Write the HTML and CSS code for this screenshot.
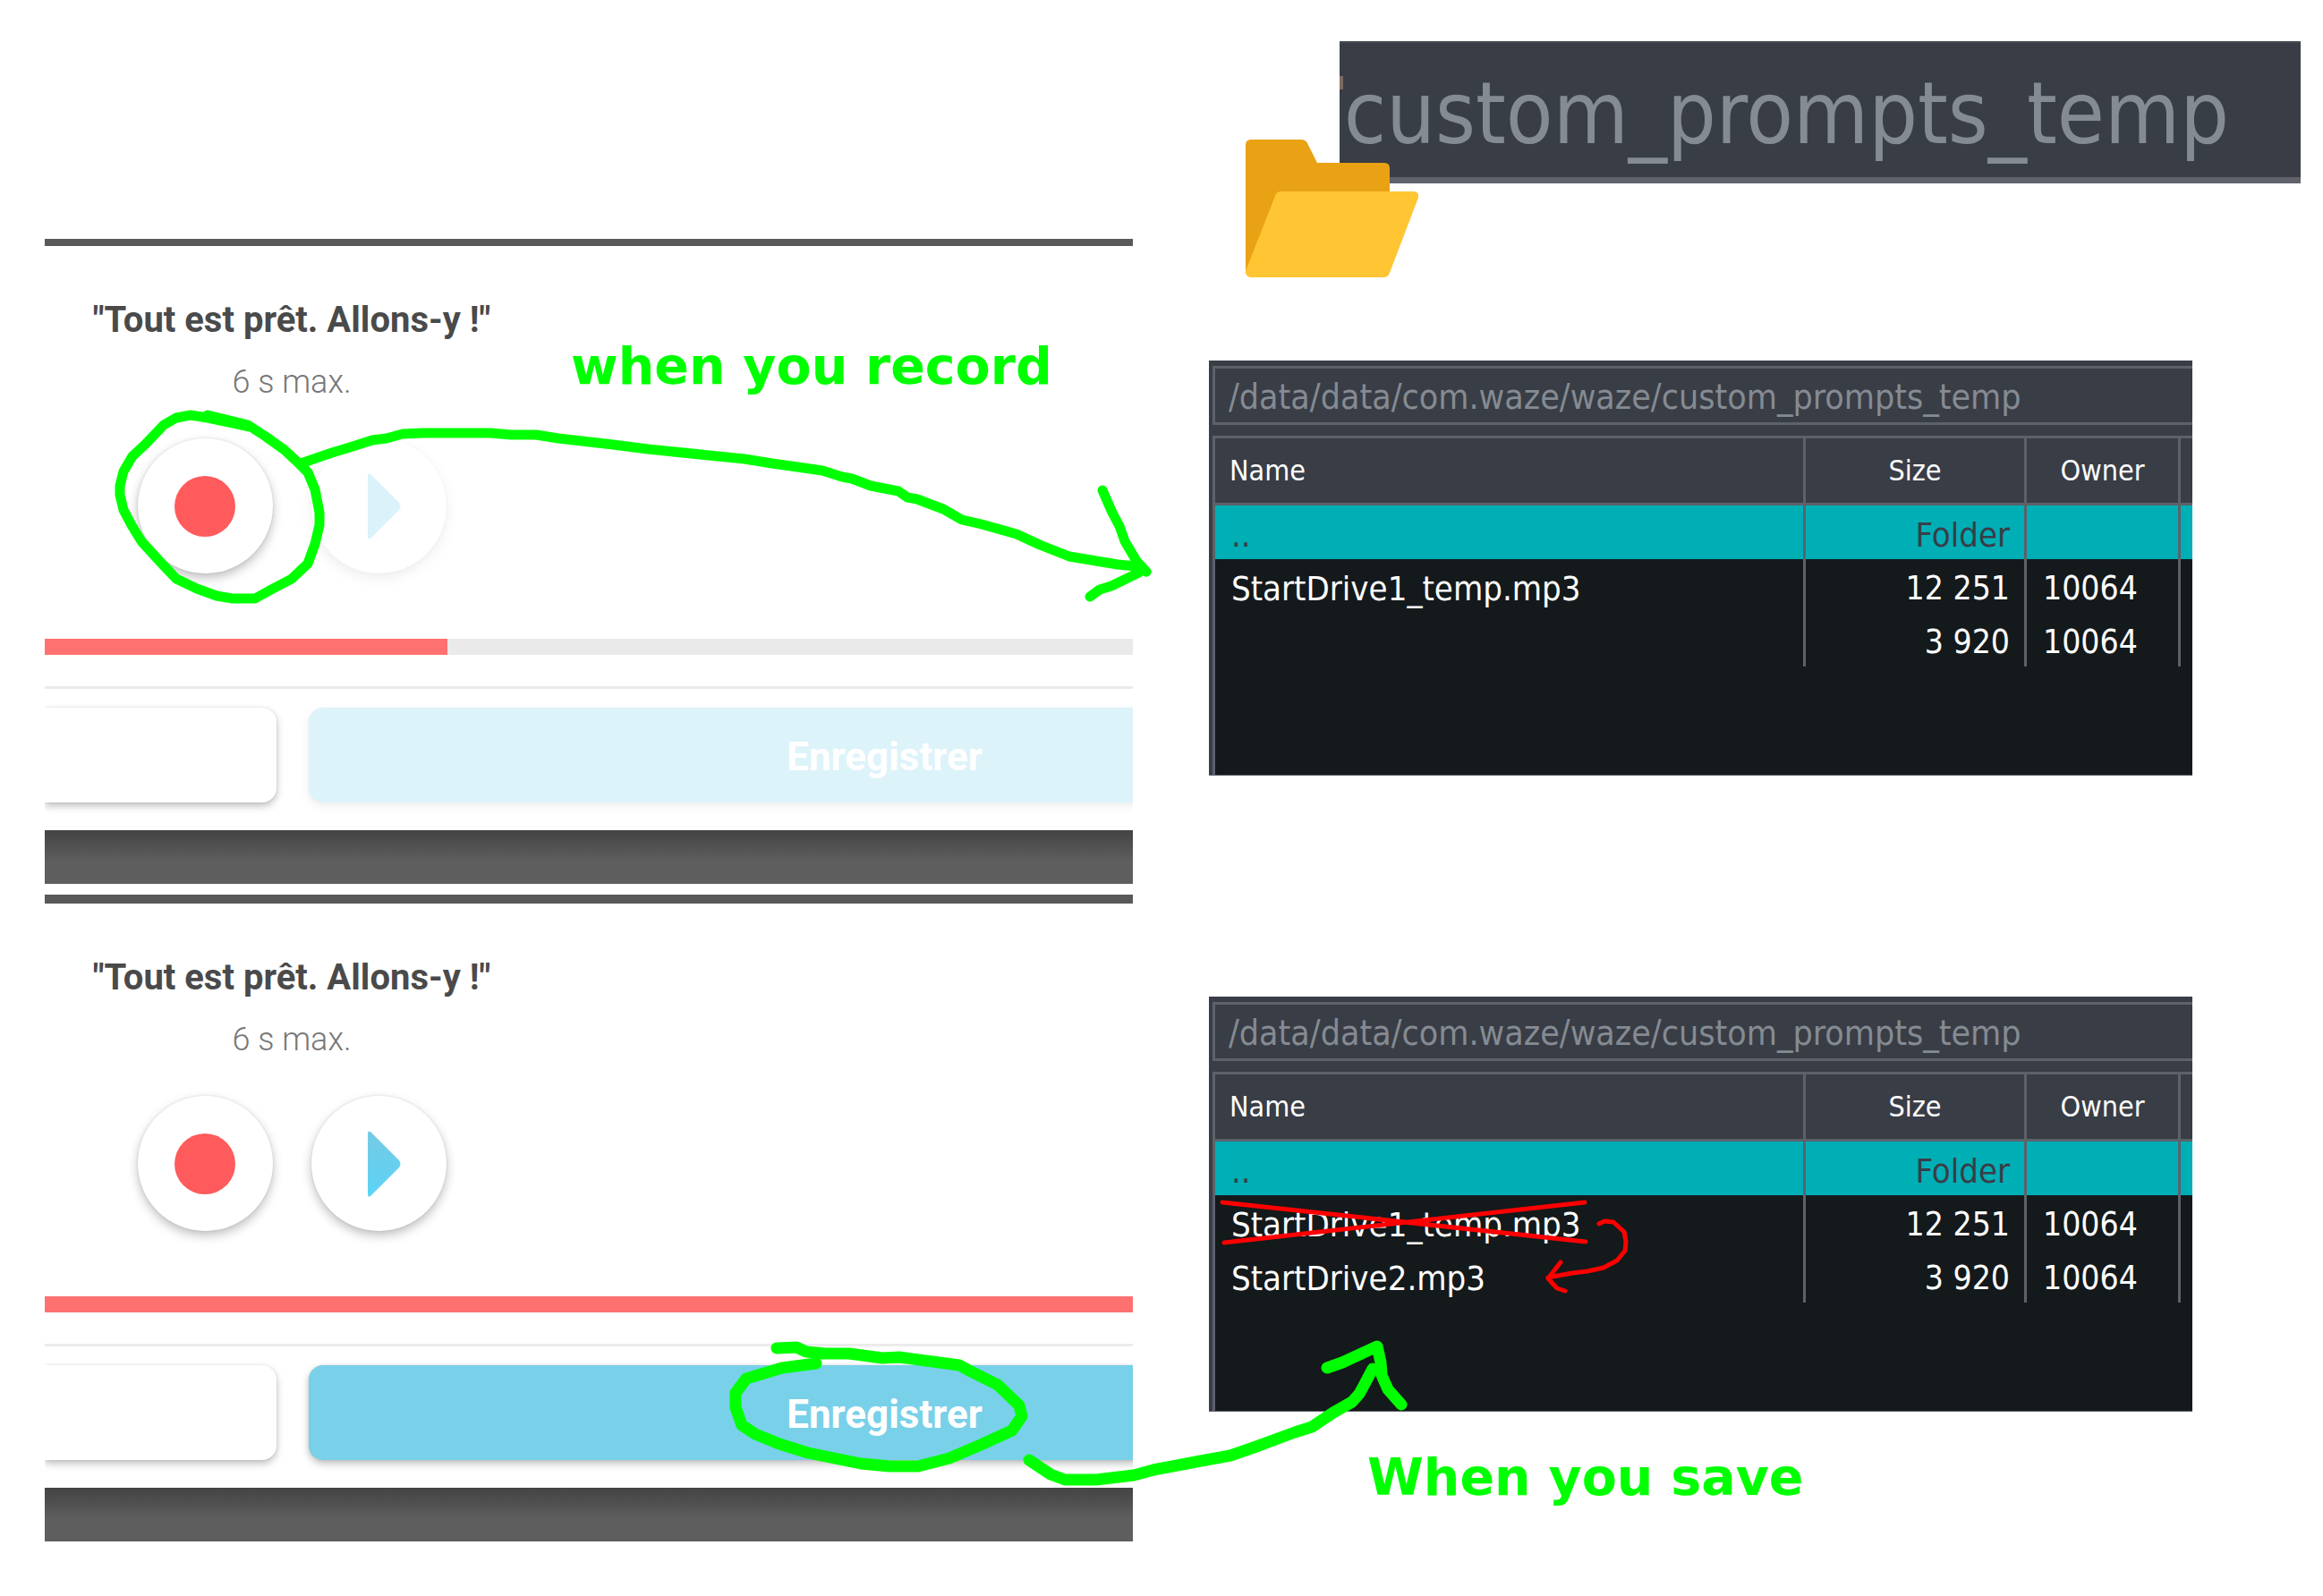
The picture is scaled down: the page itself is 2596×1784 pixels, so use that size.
FILE: index.html
```html
<!DOCTYPE html>
<html lang="en">
<head>
<meta charset="utf-8">
<title>custom_prompts_temp</title>
<link rel="stylesheet" href="styles.css">
</head>
<body>
<main class="board">
  <div class="column phones" lang="fr">
    <section class="phone">
      <div class="prompt">
        <h2 class="prompt-title">"Tout est prêt. Allons-y !"</h2>
        <p class="prompt-limit">6 s max.</p>
        <div class="controls">
          <button class="round" type="button" aria-label="Record"><span class="dot"></span></button>
          <button class="round" type="button" aria-label="Play" disabled>
            <svg class="play" viewBox="0 0 37 74" aria-hidden="true"><path d="M0 2Q1-1 4 2L35 33Q38 37 35 41L4 72Q1 75 0 72Z" fill="#70cde8"/></svg>
          </button>
        </div>
      </div>
      <div class="track" role="progressbar" aria-label="Recording" aria-valuenow="37"><div class="fill" style="width:37%"></div></div>
      <div class="actions">
        <button class="action cancel" type="button" aria-label="Cancel"></button>
        <button class="action save" type="button" disabled>Enregistrer</button>
      </div>
      <div class="footer"></div>
    </section>
    <section class="phone phone-done">
      <div class="prompt">
        <h2 class="prompt-title">"Tout est prêt. Allons-y !"</h2>
        <p class="prompt-limit">6 s max.</p>
        <div class="controls">
          <button class="round" type="button" aria-label="Record"><span class="dot"></span></button>
          <button class="round" type="button" aria-label="Play">
            <svg class="play" viewBox="0 0 37 74" aria-hidden="true"><defs><linearGradient id="playFill" x1="0" y1="0" x2="0" y2="1"><stop offset="0" stop-color="#76cae4"/><stop offset="1" stop-color="#5cd3f7"/></linearGradient></defs><path d="M0 2Q1-1 4 2L35 33Q38 37 35 41L4 72Q1 75 0 72Z" fill="url(#playFill)"/></svg>
          </button>
        </div>
      </div>
      <div class="track" role="progressbar" aria-label="Recording" aria-valuenow="100"><div class="fill" style="width:100%"></div></div>
      <div class="actions">
        <button class="action cancel" type="button" aria-label="Cancel"></button>
        <button class="action save" type="button">Enregistrer</button>
      </div>
      <div class="footer"></div>
    </section>
  </div>

  <div class="column files">
    <header class="folder-header">
      <h1 class="folder-name">custom_prompts_temp</h1>
      <svg class="folder-icon" viewBox="0 0 193 154" aria-hidden="true">
        <path d="M0 6Q0 0 6 0H62Q67 0 69 4L80 26H155Q161 26 161 32V70L20 150H0Z" fill="#e8a213"/>
        <path d="M33 63Q34 58 40 58H187Q194 58 193 65L161 149Q159 154 154 154H6Q0 154 0 147Z" fill="#ffc533"/>
      </svg>
    </header>

    <section class="explorer">
      <input class="path" type="text" aria-label="Path" value="/data/data/com.waze/waze/custom_prompts_temp" readonly>
      <div class="listing">
        <table>
          <colgroup><col><col class="col-size"><col class="col-owner"><col class="col-rest"></colgroup>
          <thead><tr><th>Name</th><th>Size</th><th>Owner</th><th></th></tr></thead>
          <tbody>
            <tr class="parent"><td>..</td><td>Folder</td><td></td><td></td></tr>
            <tr><td>StartDrive1_temp.mp3</td><td>12 251</td><td>10064</td><td></td></tr>
            <tr><td></td><td>3 920</td><td>10064</td><td></td></tr>
          </tbody>
        </table>
      </div>
    </section>

    <section class="explorer">
      <input class="path" type="text" aria-label="Path" value="/data/data/com.waze/waze/custom_prompts_temp" readonly>
      <div class="listing">
        <table>
          <colgroup><col><col class="col-size"><col class="col-owner"><col class="col-rest"></colgroup>
          <thead><tr><th>Name</th><th>Size</th><th>Owner</th><th></th></tr></thead>
          <tbody>
            <tr class="parent"><td>..</td><td>Folder</td><td></td><td></td></tr>
            <tr><td>StartDrive1_temp.mp3</td><td>12 251</td><td>10064</td><td></td></tr>
            <tr><td>StartDrive2.mp3</td><td>3 920</td><td>10064</td><td></td></tr>
          </tbody>
        </table>
      </div>
    </section>
    <p class="caption">When you save</p>
  </div>

  <p class="caption caption-record">when you record</p>

  <svg class="marks" viewBox="0 0 2596 1784" preserveAspectRatio="none" aria-hidden="true">
    <g class="pen">
      <path d="M279 477L232 467L213 464L197 467L183 475L162 497L148 510L138 527L134 543V553L138 570L147 587L158 605L179 628L197 647L220 658L242 666L260 669H285L305 658L326 647L344 630L352 608L357 587V573L352 547L344 528L334 518L318 503L297 488L277 475L232 464"/>
      <path d="M336 518L371 506L391 500L416 492L432 490L450 485L473 484H548L571 486H599L624 490L685 497L724 502L802 510L832 513L863 518L919 526L941 533L952 535L973 543L1004 549L1014 556L1025 558L1054 569L1075 581L1097 586L1136 597L1162 609L1195 622L1225 627L1249 631L1270 633L1281 639"/>
      <path d="M1232 548L1243 573L1251 588L1257 605L1270 627L1281 639M1218 667L1229 659L1242 655L1273 640"/>
    </g>
    <g class="pen pen-wide">
      <path d="M868 1507L890 1506L901 1511L922 1513H949L986 1518L1005 1517L1072 1526L1085 1533L1115 1548L1139 1571L1142 1583L1131 1599L1096 1615L1061 1630L1026 1639H994L962 1636L903 1624L871 1614L844 1603L829 1593L822 1573V1557L834 1541L874 1529L912 1524"/>
      <path d="M1150 1632L1174 1648L1190 1654H1225L1267 1649L1289 1643L1342 1633L1375 1627L1401 1618L1447 1601L1466 1595L1490 1579L1511 1567L1519 1558L1525 1547L1534 1530"/>
      <path d="M1483 1529L1500 1523L1539 1505L1543 1523L1544 1537L1551 1553L1566 1570"/>
    </g>
    <g class="pen pen-red">
      <path d="M1366 1344L1772 1388M1368 1389L1771 1344"/>
      <path d="M1787 1368L1793 1365L1803 1366L1815 1377L1817 1388L1816 1398L1807 1409L1792 1417L1774 1421L1757 1423L1730 1428M1744 1411L1730 1429L1740 1440L1749 1443"/>
    </g>
  </svg>
</main>
</body>
</html>
```
FILE: styles.css
```css
* { box-sizing: border-box; }

body {
  margin: 0;
  background: #fff;
  font-family: Roboto, sans-serif;
}

h1, h2, p { margin: 0; }
button { font: inherit; border: 0; padding: 0; }

.board {
  position: relative;
  display: grid;
  grid-template-columns: 1216fr 1220fr;
  column-gap: 85px;
  padding: 0 25px 61px 50px;
}

.column {
  display: flex;
  flex-direction: column;
  min-width: 0;
}

/* Recorder screens */
.phones { gap: 12px; padding-top: 267px; }

.phone {
  border-top: 8px solid #595959;
  overflow: hidden;
}
.phone-done { border-top-width: 10px; }

.prompt {
  width: 552px;
  padding: 59px 0 73px;
  text-align: center;
}
.prompt-title {
  font-size: 40px;
  line-height: 48px;
  font-weight: 700;
  color: #4a4a4a;
}
.prompt-limit {
  margin-top: 23px;
  font-size: 36px;
  line-height: 44px;
  font-weight: 300;
  color: #777;
}
.controls {
  display: flex;
  justify-content: center;
  gap: 43px;
  margin-top: 41px;
}
.round {
  display: grid;
  place-items: center;
  width: 151px;
  height: 151px;
  border-radius: 50%;
  background: #fff;
  box-shadow: 0 5px 12px rgba(0, 0, 0, .25), 0 0 3px rgba(0, 0, 0, .1);
}
.round:disabled { opacity: .25; }
.dot {
  width: 68px;
  height: 68px;
  border-radius: 50%;
  background: #ff5b5c;
}
.play {
  width: 37px;
  height: 74px;
  margin-left: 12px;
}

.track { height: 18px; background: #eaeaea; }
.fill { height: 100%; background: #ff7171; }

.actions {
  display: flex;
  gap: 36px;
  margin-top: 35px;
  padding: 21px 0 31px;
  border-top: 3px solid #ebebeb;
}
.action {
  flex: none;
  height: 106px;
  border-radius: 16px;
  box-shadow: 0 4px 8px rgba(0, 0, 0, .25), 0 0 3px rgba(0, 0, 0, .1);
}
.cancel {
  width: 259px;
  border-radius: 0 16px 16px 0;
  background: #fff;
}
.save {
  width: 1287px;
  padding-top: 3px;
  background: #79d0e9;
  color: #fff;
  font-size: 44px;
  line-height: 48px;
  font-weight: 700;
}
.save:disabled { opacity: .25; }

.footer {
  height: 60px;
  background: linear-gradient(#444, #4c4c4c 12px, #5e5e5e 34px);
}

/* File explorer */
.files {
  padding-top: 46px;
  font-family: "DejaVu Sans Condensed", "DejaVu Sans", sans-serif;
  font-stretch: condensed;
}

.folder-header {
  position: relative;
  margin-left: 146px;
}
.folder-name {
  height: 159px;
  padding: 19px 80px 0 0;
  border-top: 2px solid #464a52;
  border-bottom: 7px solid #5f626a;
  background: #393d46;
  color: #858b92;
  font-size: 96px;
  line-height: 120px;
  font-weight: 400;
  text-align: right;
}
/* Tip of the path separator at the left edge */
.folder-name::before {
  content: "";
  position: absolute;
  left: 0;
  top: 39px;
  width: 4px;
  height: 15px;
  background: #7d6a60;
}
.folder-icon {
  position: absolute;
  left: -105px;
  top: 110px;
  width: 193px;
  height: 154px;
}

.explorer {
  margin: 198px 121px 0 0;
  padding: 6px 0 0 4px;
  background: #393d46;
  border-bottom: 1px solid #5d616a;
}
.explorer + .explorer { margin-top: 247px; }

.path {
  display: block;
  width: 100%;
  height: 66px;
  margin: 0 0 12px;
  padding: 3px 0 0 15px;
  border: 3px solid #5d616a;
  border-right: 0;
  border-radius: 0;
  background: transparent;
  color: #858b92;
  font: inherit;
  font-size: 39px;
}

.listing {
  padding-bottom: 121px;
  border: solid #5d616a;
  border-width: 3px 0 0 3px;
  background: #14191b;
}
.listing table {
  width: 100%;
  table-layout: fixed;
  border-spacing: 0;
  font-size: 37px;
  line-height: 44px;
  color: #fff;
}
.col-size { width: 247px; }
.col-owner { width: 172px; }
.col-rest { width: 13px; }

th, td { border-right: 3px solid #5d616a; text-align: left; }
th:last-child, td:last-child { padding: 0; border-right: 0; }
th {
  height: 75px;
  padding: 0 16px;
  border-bottom: 3px solid #5d616a;
  background: #393d46;
  font-size: 32px;
  font-weight: 400;
}
th:nth-child(2), th:nth-child(3) { text-align: center; }
td { height: 60px; padding: 5px 16px 0 18px; }
td:first-child, .parent td { font-size: 38px; }
td:nth-child(2) { text-align: right; }
.parent td { background: #00aeb6; color: #393d46; }

/* Annotations */
.caption {
  margin: 37px 0 0 177px;
  color: #0f0;
  font-family: "DejaVu Sans", sans-serif;
  font-size: 57px;
  line-height: 72px;
  font-weight: 700;
  font-stretch: normal;
  white-space: nowrap;
}
.caption-record {
  position: absolute;
  left: 638px;
  top: 373px;
  margin: 0;
}
.marks {
  position: absolute;
  inset: 0;
  width: 100%;
  height: 100%;
  pointer-events: none;
}
.pen {
  fill: none;
  stroke: #0f0;
  stroke-width: 11;
  stroke-linecap: round;
  stroke-linejoin: round;
}
.pen-wide { stroke-width: 13; }
.pen-red { stroke: #f00; stroke-width: 5; }
```
